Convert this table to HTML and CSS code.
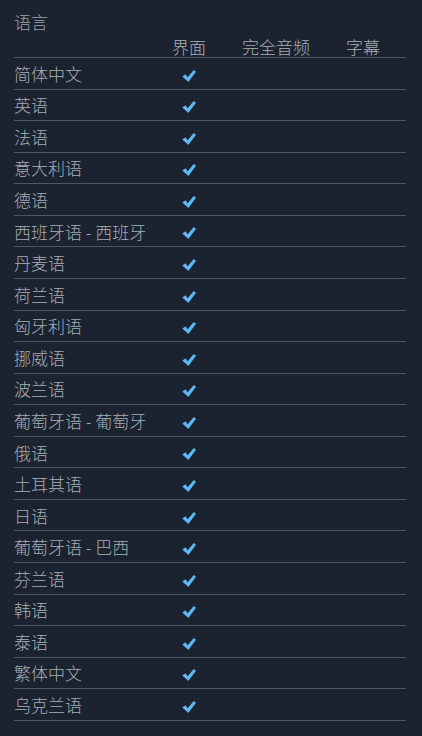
FILE: index.html
```html
<!DOCTYPE html>
<html lang="zh-CN">
<head>
<meta charset="utf-8">
<link rel="stylesheet" href="styles.css">
</head>
<body>
<div class="langs">
  <div class="title">语言</div>
  <div class="row head">
    <div class="name"></div>
    <div class="col">界面</div>
    <div class="col">完全音频</div>
    <div class="col">字幕</div>
  </div>
  <div class="row"><div class="name">简体中文</div><div class="col"><svg class="check" viewBox="0 0 14 12"><path d="M0.3 6.4 L3.5 4.3 L5.7 7.3 L11.7 0 L14 1.7 L6.4 12 Z"/></svg></div><div class="col"></div><div class="col"></div></div>
  <div class="row"><div class="name">英语</div><div class="col"><svg class="check" viewBox="0 0 14 12"><path d="M0.3 6.4 L3.5 4.3 L5.7 7.3 L11.7 0 L14 1.7 L6.4 12 Z"/></svg></div><div class="col"></div><div class="col"></div></div>
  <div class="row"><div class="name">法语</div><div class="col"><svg class="check" viewBox="0 0 14 12"><path d="M0.3 6.4 L3.5 4.3 L5.7 7.3 L11.7 0 L14 1.7 L6.4 12 Z"/></svg></div><div class="col"></div><div class="col"></div></div>
  <div class="row"><div class="name">意大利语</div><div class="col"><svg class="check" viewBox="0 0 14 12"><path d="M0.3 6.4 L3.5 4.3 L5.7 7.3 L11.7 0 L14 1.7 L6.4 12 Z"/></svg></div><div class="col"></div><div class="col"></div></div>
  <div class="row"><div class="name">德语</div><div class="col"><svg class="check" viewBox="0 0 14 12"><path d="M0.3 6.4 L3.5 4.3 L5.7 7.3 L11.7 0 L14 1.7 L6.4 12 Z"/></svg></div><div class="col"></div><div class="col"></div></div>
  <div class="row"><div class="name">西班牙语 - 西班牙</div><div class="col"><svg class="check" viewBox="0 0 14 12"><path d="M0.3 6.4 L3.5 4.3 L5.7 7.3 L11.7 0 L14 1.7 L6.4 12 Z"/></svg></div><div class="col"></div><div class="col"></div></div>
  <div class="row"><div class="name">丹麦语</div><div class="col"><svg class="check" viewBox="0 0 14 12"><path d="M0.3 6.4 L3.5 4.3 L5.7 7.3 L11.7 0 L14 1.7 L6.4 12 Z"/></svg></div><div class="col"></div><div class="col"></div></div>
  <div class="row"><div class="name">荷兰语</div><div class="col"><svg class="check" viewBox="0 0 14 12"><path d="M0.3 6.4 L3.5 4.3 L5.7 7.3 L11.7 0 L14 1.7 L6.4 12 Z"/></svg></div><div class="col"></div><div class="col"></div></div>
  <div class="row"><div class="name">匈牙利语</div><div class="col"><svg class="check" viewBox="0 0 14 12"><path d="M0.3 6.4 L3.5 4.3 L5.7 7.3 L11.7 0 L14 1.7 L6.4 12 Z"/></svg></div><div class="col"></div><div class="col"></div></div>
  <div class="row"><div class="name">挪威语</div><div class="col"><svg class="check" viewBox="0 0 14 12"><path d="M0.3 6.4 L3.5 4.3 L5.7 7.3 L11.7 0 L14 1.7 L6.4 12 Z"/></svg></div><div class="col"></div><div class="col"></div></div>
  <div class="row"><div class="name">波兰语</div><div class="col"><svg class="check" viewBox="0 0 14 12"><path d="M0.3 6.4 L3.5 4.3 L5.7 7.3 L11.7 0 L14 1.7 L6.4 12 Z"/></svg></div><div class="col"></div><div class="col"></div></div>
  <div class="row"><div class="name">葡萄牙语 - 葡萄牙</div><div class="col"><svg class="check" viewBox="0 0 14 12"><path d="M0.3 6.4 L3.5 4.3 L5.7 7.3 L11.7 0 L14 1.7 L6.4 12 Z"/></svg></div><div class="col"></div><div class="col"></div></div>
  <div class="row"><div class="name">俄语</div><div class="col"><svg class="check" viewBox="0 0 14 12"><path d="M0.3 6.4 L3.5 4.3 L5.7 7.3 L11.7 0 L14 1.7 L6.4 12 Z"/></svg></div><div class="col"></div><div class="col"></div></div>
  <div class="row"><div class="name">土耳其语</div><div class="col"><svg class="check" viewBox="0 0 14 12"><path d="M0.3 6.4 L3.5 4.3 L5.7 7.3 L11.7 0 L14 1.7 L6.4 12 Z"/></svg></div><div class="col"></div><div class="col"></div></div>
  <div class="row"><div class="name">日语</div><div class="col"><svg class="check" viewBox="0 0 14 12"><path d="M0.3 6.4 L3.5 4.3 L5.7 7.3 L11.7 0 L14 1.7 L6.4 12 Z"/></svg></div><div class="col"></div><div class="col"></div></div>
  <div class="row"><div class="name">葡萄牙语 - 巴西</div><div class="col"><svg class="check" viewBox="0 0 14 12"><path d="M0.3 6.4 L3.5 4.3 L5.7 7.3 L11.7 0 L14 1.7 L6.4 12 Z"/></svg></div><div class="col"></div><div class="col"></div></div>
  <div class="row"><div class="name">芬兰语</div><div class="col"><svg class="check" viewBox="0 0 14 12"><path d="M0.3 6.4 L3.5 4.3 L5.7 7.3 L11.7 0 L14 1.7 L6.4 12 Z"/></svg></div><div class="col"></div><div class="col"></div></div>
  <div class="row"><div class="name">韩语</div><div class="col"><svg class="check" viewBox="0 0 14 12"><path d="M0.3 6.4 L3.5 4.3 L5.7 7.3 L11.7 0 L14 1.7 L6.4 12 Z"/></svg></div><div class="col"></div><div class="col"></div></div>
  <div class="row"><div class="name">泰语</div><div class="col"><svg class="check" viewBox="0 0 14 12"><path d="M0.3 6.4 L3.5 4.3 L5.7 7.3 L11.7 0 L14 1.7 L6.4 12 Z"/></svg></div><div class="col"></div><div class="col"></div></div>
  <div class="row"><div class="name">繁体中文</div><div class="col"><svg class="check" viewBox="0 0 14 12"><path d="M0.3 6.4 L3.5 4.3 L5.7 7.3 L11.7 0 L14 1.7 L6.4 12 Z"/></svg></div><div class="col"></div><div class="col"></div></div>
  <div class="row"><div class="name">乌克兰语</div><div class="col"><svg class="check" viewBox="0 0 14 12"><path d="M0.3 6.4 L3.5 4.3 L5.7 7.3 L11.7 0 L14 1.7 L6.4 12 Z"/></svg></div><div class="col"></div><div class="col"></div></div>
</div>
</body>
</html>
```
FILE: styles.css
```css
html, body {
  margin: 0;
  padding: 0;
  background: #1b2230;
}
body {
  font-family: "Noto Sans CJK SC", "Noto Sans", sans-serif;
  font-size: 17px;
  font-weight: 300;
  color: #a7aeb5;
}
.langs {
  padding: 12px 16px 0 14px;
}
.title {
  height: 20px;
  line-height: 20px;
  color: #9ba2a9;
}
.row {
  display: grid;
  grid-template-columns: 131.5px 87px 87px 87px;
  align-items: center;
  height: 30.57px;
  border-bottom: 1px solid #4b5563;
}
.row.head {
  height: 25px;
  align-items: end;
  line-height: 20px;
}
.name {
  white-space: nowrap;
  line-height: 20px;
  padding-top: 1px;
}
.col {
  text-align: center;
  line-height: 20px;
  white-space: nowrap;
}
.check {
  display: inline-block;
  width: 14px;
  height: 12px;
  vertical-align: middle;
  fill: #5cb9f3;
}
```
